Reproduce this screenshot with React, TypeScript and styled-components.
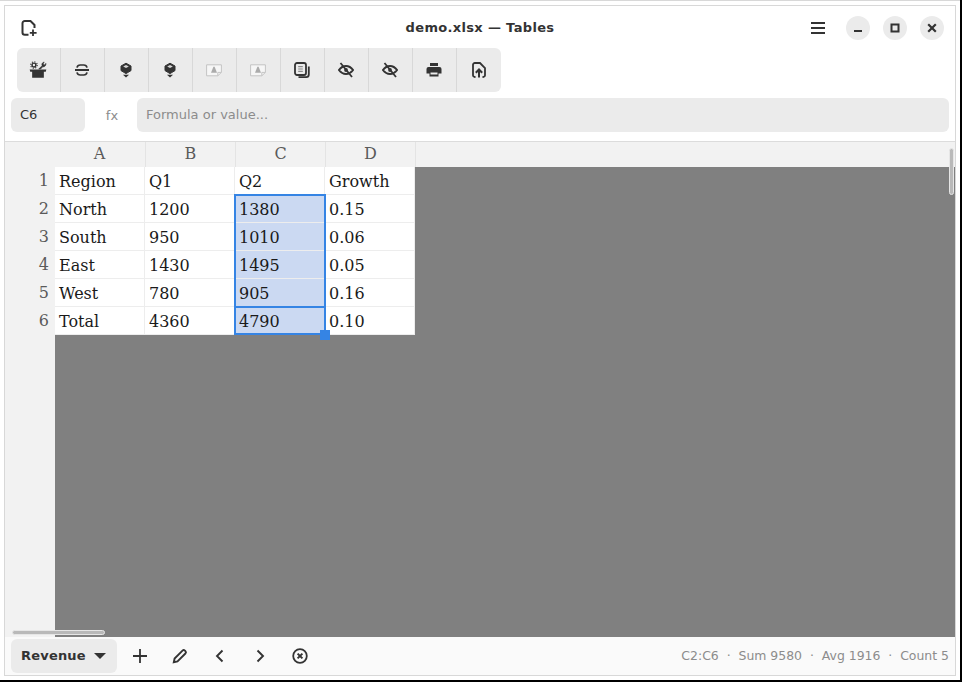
import React from "react";
import styled, { createGlobalStyle } from "styled-components";

const Global = createGlobalStyle`
  html, body {
    margin: 0;
    padding: 0;
    width: 962px;
    height: 682px;
    overflow: hidden;
    background: #000;
  }
  * { box-sizing: border-box; }
`;

const Screen = styled.div`
  width: 962px;
  height: 682px;
  padding: 0 2px 2px 0;
  background: #000;
`;

const Outer = styled.div`
  width: 960px;
  height: 680px;
  background: #fff;
  padding: 4px;
  border-top: 1px solid #d8d8d8;
`;

const Window = styled.div`
  width: 100%;
  height: 100%;
  display: flex;
  flex-direction: column;
  border: 1px solid #d8d8d8;
  background: #fff;
  font-family: "DejaVu Sans", sans-serif;
  color: #333;
`;

const Header = styled.div`
  height: 42px;
  flex: none;
  display: flex;
  align-items: center;
  position: relative;
  padding: 2px 11px 0 14px;
`;

const Title = styled.div`
  position: absolute;
  left: 0;
  right: 0;
  top: 13px;
  text-align: center;
  font-size: 13px;
  font-weight: 700;
  line-height: 18px;
  letter-spacing: 0.33px;
`;

const HeadIcon = styled.div`
  width: 20px;
  height: 20px;
  display: flex;
  align-items: center;
  justify-content: center;
`;

const HeadRight = styled.div`
  margin-left: auto;
  display: flex;
  align-items: center;
  gap: 13px;
`;

const MenuSlot = styled.div`
  width: 16px;
  height: 16px;
  margin-right: 6px;
  display: flex;
  align-items: center;
`;

const RoundButton = styled.div`
  width: 24px;
  height: 24px;
  border-radius: 50%;
  background: #ebebeb;
  display: flex;
  align-items: center;
  justify-content: center;
`;

const Toolbar = styled.div`
  flex: none;
  display: flex;
  width: 484px;
  height: 44px;
  margin-left: 12px;
  background: #ebebeb;
  border-radius: 6px;
`;

const ToolButton = styled.div`
  width: 44px;
  height: 44px;
  padding-right: 1px;
  display: flex;
  align-items: center;
  justify-content: center;
  border-right: 1px solid #d8d8d8;
  &:last-child { border-right: 0; }
`;

const FormulaRow = styled.div`
  flex: none;
  display: flex;
  align-items: center;
  height: 34px;
  margin-top: 6px;
  padding: 0 6px;
`;

const NameBox = styled.div`
  width: 74px;
  height: 34px;
  background: #ebebeb;
  border-radius: 6px;
  padding-left: 9px;
  font-size: 13px;
  line-height: 33px;
`;

const FxLabel = styled.div`
  width: 52px;
  padding-left: 2px;
  text-align: center;
  font-size: 13px;
  color: #8c8c8c;
`;

const FormulaInput = styled.div`
  flex: 1;
  height: 34px;
  background: #ebebeb;
  border-radius: 6px;
  padding-left: 9px;
  font-size: 13px;
  line-height: 33px;
  color: #8c8c8c;
`;

const Sheet = styled.div`
  flex: 1;
  margin-top: 9px;
  border-top: 1px solid #dcdcdc;
  display: grid;
  grid-template-columns: 50px 1fr;
  grid-template-rows: 25px 1fr;
  position: relative;
  min-height: 0;
  font-family: "DejaVu Serif", serif;
`;

const ColumnHeads = styled.div`
  grid-column: 1 / 3;
  display: flex;
  padding-left: 50px;
  background: #f2f2f2;
`;

const ColumnHead = styled.div`
  width: 90px;
  border-right: 1px solid #e4e4e4;
  text-align: center;
  font-size: 16px;
  line-height: 24px;
  color: #5a5a5a;
  &:first-child { width: 91px; padding-right: 1px; }
`;

const RowHeads = styled.div`
  background: #f2f2f2;
`;

const RowHead = styled.div`
  height: 28px;
  padding-right: 6px;
  text-align: right;
  font-size: 16px;
  line-height: 27px;
  color: #5a5a5a;
`;

const Canvas = styled.div`
  background: #808080;
  position: relative;
`;

const Grid = styled.div`
  display: grid;
  grid-template-columns: repeat(4, 90px);
  grid-auto-rows: 28px;
  width: 360px;
  background: #fff;
`;

const Cell = styled.div<{ $picked?: boolean }>`
  padding: 1px 0 0 4px;
  font-size: 16px;
  line-height: 28px;
  color: #1a1a1a;
  border-right: 1px solid #ededed;
  border-bottom: 1px solid #ededed;
  background: ${(p) => (p.$picked ? "#cbd9f2" : "#fff")};
`;

const Selection = styled.div`
  position: absolute;
  left: 179px;
  top: 27px;
  width: 92px;
  height: 141px;
  border: 2px solid #3584e4;
  pointer-events: none;
`;

const ActiveCell = styled.div`
  position: absolute;
  left: 179px;
  top: 139px;
  width: 92px;
  height: 29px;
  border: 2px solid #3584e4;
`;

const Handle = styled.div`
  position: absolute;
  left: 265px;
  top: 163px;
  width: 10px;
  height: 10px;
  background: #3584e4;
`;

const VScroll = styled.div`
  position: absolute;
  right: 1px;
  top: 6px;
  width: 5px;
  height: 47px;
  border-radius: 3px;
  background: #b9b9b9;
  border: 1px solid #e6e6e6;
`;

const HScroll = styled.div`
  position: absolute;
  left: 7px;
  bottom: 2px;
  width: 93px;
  height: 5px;
  border-radius: 3px;
  background: #b9b9b9;
  border: 1px solid #e6e6e6;
`;

const Footer = styled.div`
  flex: none;
  height: 38px;
  display: flex;
  align-items: center;
  padding: 0 6px;
  background: #fafafa;
`;

const SheetTab = styled.div`
  width: 106px;
  height: 34px;
  margin-right: 3px;
  background: #ebebeb;
  border-radius: 6px;
  display: flex;
  align-items: center;
  justify-content: space-between;
  padding: 0 11px 2px 10px;
  font-size: 13px;
  font-weight: 700;
  letter-spacing: 0.2px;
`;

const Caret = styled.div`
  width: 0;
  height: 0;
  margin-top: 2px;
  border-left: 6px solid transparent;
  border-right: 6px solid transparent;
  border-top: 6px solid #333;
`;

const FootButton = styled.div`
  width: 40px;
  height: 34px;
  display: flex;
  align-items: center;
  justify-content: center;
`;

const Status = styled.div`
  margin-left: auto;
  padding-bottom: 1px;
  font-size: 12.45px;
  color: #8c8c8c;
  white-space: pre;
`;

const Glyph = ({ children, size = 16 }: { children: React.ReactNode; size?: number }) => (
  <svg width={size} height={size} viewBox="0 0 16 16" fill="none" stroke="#333" strokeWidth="1.6">
    {children}
  </svg>
);

const ToolsIcon = () => (
  <Glyph size={18}>
    <circle cx="4.400" cy="3.600" r="1.700" strokeWidth="1.300" />
    <circle cx="4.400" cy="3.600" r="2.900" strokeWidth="1" strokeDasharray="1 1.280" />
    <path d="M8.600 7.200 11.600 4.200c-.6-1.500.3-3 1.900-3.300l-1 1.700 1.300 1 1.200-1.500c.4 1.700-1 3.400-2.800 3.100L10.300 7.200z" fill="#333" strokeWidth=".5" />
    <path d="M.6 7.600h14.800l-.5 2H13.200V14.800H2.800V9.600H1.100z" fill="#333" stroke="none" />
  </Glyph>
);

const SyncIcon = () => (
  <Glyph>
    <path d="M1 8h14" strokeWidth="2" />
    <path d="M3 5.600C3.400 3.800 4.700 3 6.200 3h3.600c1.500 0 2.800.8 3.200 2.600" strokeWidth="1.700" />
    <path d="M3 10.400c.4 1.800 1.700 2.600 3.200 2.600h3.600c1.500 0 2.800-.8 3.200-2.600" strokeWidth="1.700" />
  </Glyph>
);

const PinIcon = () => (
  <Glyph>
    <path d="M8 1.200 13 4v4.600L8 11.600 3 8.600V4z" fill="#333" stroke="#333" strokeWidth="1" strokeLinejoin="round" />
    <path d="M5.200 4.400 8 2.900l2.800 1.500L8 6z" fill="#d6d6d6" stroke="none" />
    <path d="M5 12.800h6L8 15.500z" fill="#333" stroke="none" />
  </Glyph>
);

const NoteIcon = () => (
  <Glyph>
    <path d="M.6 2.800h14.800v7.600l-3.600 3.400H.6z" fill="#f6f6f6" stroke="#c4c4c4" strokeWidth="1" />
    <path d="M11.800 13.800v-3.400h3.600" stroke="#c4c4c4" strokeWidth="1" />
    <path d="M7.400 4.800h1.200L11 10.800H5z" fill="#ababab" stroke="none" />
  </Glyph>
);

const PagesIcon = () => (
  <Glyph>
    <rect x="1" y="1" width="11" height="12" rx="2" strokeWidth="1.800" />
    <path d="M14.800 4.500v8a2.600 2.600 0 0 1-2.600 2.600H4.500" strokeWidth="1.800" />
    <path d="M4.200 4.600h4.600M4.200 7h4.600M4.200 9.400h4.600" strokeWidth="1.100" stroke="#8a8a8a" />
  </Glyph>
);

const HiddenIcon = () => (
  <Glyph>
    <path d="M1 8C3.200 5 5.500 4 8 4s4.800 1 7 4c-2.200 3-4.500 4-7 4S3.200 11 1 8z" strokeWidth="2.100" />
    <circle cx="8" cy="8" r="1.900" fill="#333" stroke="none" />
    <path d="M2.500 1 14 15" strokeWidth="1.800" />
  </Glyph>
);

const PrintIcon = () => (
  <Glyph>
    <path d="M4 1h8v3H4z" fill="#333" stroke="none" />
    <path d="M2.500 5h11A2 2 0 0 1 15.500 7v4.500h-3V14.500h-9v-3H.5V7a2 2 0 0 1 2-2z" fill="#333" stroke="none" />
    <path d="M4.500 10.500h7v2h-7z" fill="#ebebeb" stroke="none" />
  </Glyph>
);

const UploadIcon = () => (
  <Glyph>
    <path d="M4.500 15h-.700A1.800 1.800 0 0 1 2 13.200V2.800A1.800 1.800 0 0 1 3.800 1h5.200L14 6v7.200A1.800 1.800 0 0 1 12.200 15h-.700" strokeWidth="1.800" />
    <path d="M8 15.500V8M4.800 10.800 8 7.500l3.200 3.300" strokeWidth="2" />
  </Glyph>
);

const rows = [
  ["Region", "Q1", "Q2", "Growth"],
  ["North", "1200", "1380", "0.15"],
  ["South", "950", "1010", "0.06"],
  ["East", "1430", "1495", "0.05"],
  ["West", "780", "905", "0.16"],
  ["Total", "4360", "4790", "0.10"],
];

const App = () => (
  <Screen>
    <Global />
    <Outer>
      <Window>
        <Header>
          <Title>demo.xlsx — Tables</Title>
          <HeadIcon>
            <Glyph>
              <path d="M7.500 14.800H3.800A2.300 2.300 0 0 1 1.500 12.500V3.300A2.300 2.300 0 0 1 3.800 1h5.700l4 4V8" strokeWidth="2" />
              <path d="M12 9.500v6.500M8.800 12.800h6.800" strokeWidth="1.800" />
            </Glyph>
          </HeadIcon>
          <HeadRight>
            <MenuSlot>
              <svg width="14" height="12" viewBox="0 0 14 12">
                <path d="M0 1h14M0 6h14M0 11h14" stroke="#333" strokeWidth="2" />
              </svg>
            </MenuSlot>
            <RoundButton>
              <svg width="10" height="10" viewBox="0 0 10 10">
                <path d="M1 8h8" stroke="#333" strokeWidth="2" />
              </svg>
            </RoundButton>
            <RoundButton>
              <svg width="10" height="10" viewBox="0 0 10 10" fill="none">
                <rect x="1.500" y="1.500" width="7" height="7" stroke="#333" strokeWidth="2" />
              </svg>
            </RoundButton>
            <RoundButton>
              <svg width="10" height="10" viewBox="0 0 10 10">
                <path d="M1.200 1.200l7.600 7.600M8.800 1.200l-7.600 7.600" stroke="#333" strokeWidth="2.200" />
              </svg>
            </RoundButton>
          </HeadRight>
        </Header>
        <Toolbar>
          <ToolButton><ToolsIcon /></ToolButton>
          <ToolButton><SyncIcon /></ToolButton>
          <ToolButton><PinIcon /></ToolButton>
          <ToolButton><PinIcon /></ToolButton>
          <ToolButton><NoteIcon /></ToolButton>
          <ToolButton><NoteIcon /></ToolButton>
          <ToolButton><PagesIcon /></ToolButton>
          <ToolButton><HiddenIcon /></ToolButton>
          <ToolButton><HiddenIcon /></ToolButton>
          <ToolButton><PrintIcon /></ToolButton>
          <ToolButton><UploadIcon /></ToolButton>
        </Toolbar>
        <FormulaRow>
          <NameBox>C6</NameBox>
          <FxLabel>fx</FxLabel>
          <FormulaInput>Formula or value...</FormulaInput>
        </FormulaRow>
        <Sheet>
          <ColumnHeads>
            {["A", "B", "C", "D"].map((c) => (
              <ColumnHead key={c}>{c}</ColumnHead>
            ))}
          </ColumnHeads>
          <RowHeads>
            {rows.map((_, i) => (
              <RowHead key={i}>{i + 1}</RowHead>
            ))}
          </RowHeads>
          <Canvas>
            <Grid>
              {rows.flatMap((row, r) =>
                row.map((text, c) => (
                  <Cell key={`${r}-${c}`} $picked={c === 2 && r > 0}>
                    {text}
                  </Cell>
                ))
              )}
            </Grid>
            <Selection />
            <ActiveCell />
            <Handle />
          </Canvas>
          <VScroll />
          <HScroll />
        </Sheet>
        <Footer>
          <SheetTab>
            Revenue
            <Caret />
          </SheetTab>
          <FootButton>
            <Glyph>
              <path d="M8 1v14M1 8h14" strokeWidth="1.800" />
            </Glyph>
          </FootButton>
          <FootButton>
            <Glyph>
              <path d="M1.800 14.200l.8-3.700 7.900-7.900a1.700 1.700 0 0 1 2.400 0l.5.500a1.700 1.700 0 0 1 0 2.400l-7.900 7.900z" strokeWidth="1.900" />
            </Glyph>
          </FootButton>
          <FootButton>
            <Glyph>
              <path d="M10.500 2.500 5 8l5.500 5.500" strokeWidth="1.900" />
            </Glyph>
          </FootButton>
          <FootButton>
            <Glyph>
              <path d="M5.500 2.500 11 8l-5.500 5.500" strokeWidth="1.900" />
            </Glyph>
          </FootButton>
          <FootButton>
            <Glyph>
              <circle cx="8" cy="8" r="6.800" strokeWidth="1.800" />
              <path d="M5.600 5.600l4.800 4.800M10.400 5.600l-4.800 4.800" strokeWidth="2" />
            </Glyph>
          </FootButton>
          <Status>{"C2:C6  ·  Sum 9580  ·  Avg 1916  ·  Count 5"}</Status>
        </Footer>
      </Window>
    </Outer>
  </Screen>
);

export default App;
